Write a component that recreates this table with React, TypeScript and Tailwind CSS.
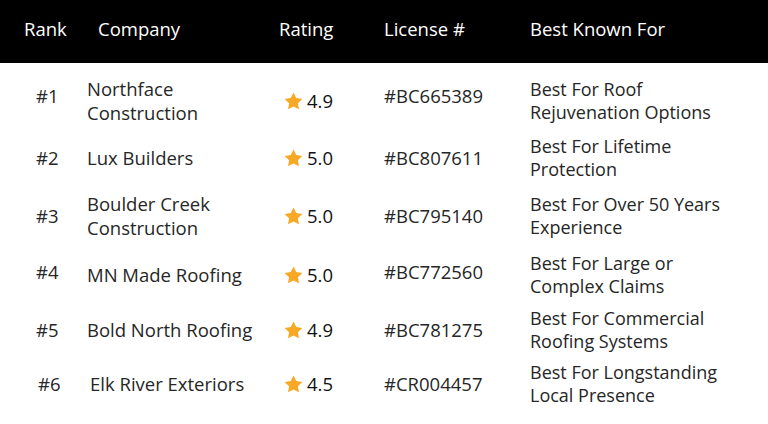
const rows = [
  { rank: "#1", company: ["Northface", "Construction"], rating: "4.9", license: "#BC665389", best: ["Best For Roof", "Rejuvenation Options"], h: "h-[56px]", up: "mb-[10px]", rankPad: "pl-[36px]", shift: "" },
  { rank: "#2", company: ["Lux Builders"], rating: "5.0", license: "#BC807611", best: ["Best For Lifetime", "Protection"], h: "h-[58px]", up: "", rankPad: "pl-[36px]", shift: "" },
  { rank: "#3", company: ["Boulder Creek", "Construction"], rating: "5.0", license: "#BC795140", best: ["Best For Over 50 Years", "Experience"], h: "h-[58px]", up: "", rankPad: "pl-[36px]", shift: "" },
  { rank: "#4", company: ["MN Made Roofing"], rating: "5.0", license: "#BC772560", best: ["Best For Large or", "Complex Claims"], h: "h-[60px]", up: "mb-[6px]", rankPad: "pl-[36px]", shift: "" },
  { rank: "#5", company: ["Bold North Roofing"], rating: "4.9", license: "#BC781275", best: ["Best For Commercial", "Roofing Systems"], h: "h-[50px]", up: "", rankPad: "pl-[36px]", shift: "" },
  { rank: "#6", company: ["Elk River Exteriors"], rating: "4.5", license: "#CR004457", best: ["Best For Longstanding", "Local Presence"], h: "h-[58px]", up: "", rankPad: "pl-[38px]", shift: "pl-[3px]" },
];

function Star() {
  return (
    <svg width="19" height="18" viewBox="0 0 24 23" className="shrink-0">
      <path
        d="M12 0.6l3.5 7.1 7.8 1.1-5.65 5.5 1.35 7.8L12 18.4l-7 3.7 1.35-7.8L0.7 8.8l7.8-1.1z"
        fill="#f7a825"
      />
    </svg>
  );
}

export default function App() {
  return (
    <div className="w-[768px] h-[424px] bg-white overflow-hidden font-['Open_Sans',sans-serif] text-[18.5px]">
      <div className="h-[63px] bg-black text-white flex items-center leading-none pb-[4px]">
        <div className="w-[98px] pl-[24px]">Rank</div>
        <div className="w-[181px]">Company</div>
        <div className="w-[105px]">Rating</div>
        <div className="w-[146px]">License #</div>
        <div>Best Known For</div>
      </div>
      <div className="pt-[10px] text-[#262626] leading-[24px]">
        {rows.map((r) => (
          <div key={r.rank} className={`flex items-center ${r.h}`}>
            <div className={`w-[87px] ${r.rankPad} ${r.up}`}>{r.rank}</div>
            <div className={`w-[197px] ${r.shift}`}>
              {r.company.map((c) => (
                <div key={c}>{c}</div>
              ))}
            </div>
            <div className="w-[100px] flex items-center gap-[4px] text-[#111]">
              <Star />
              <span>{r.rating}</span>
            </div>
            <div className={`w-[146px] ${r.up}`}>{r.license}</div>
            <div className="text-[18px] leading-[23px]">
              {r.best.map((b) => (
                <div key={b}>{b}</div>
              ))}
            </div>
          </div>
        ))}
      </div>
    </div>
  );
}
